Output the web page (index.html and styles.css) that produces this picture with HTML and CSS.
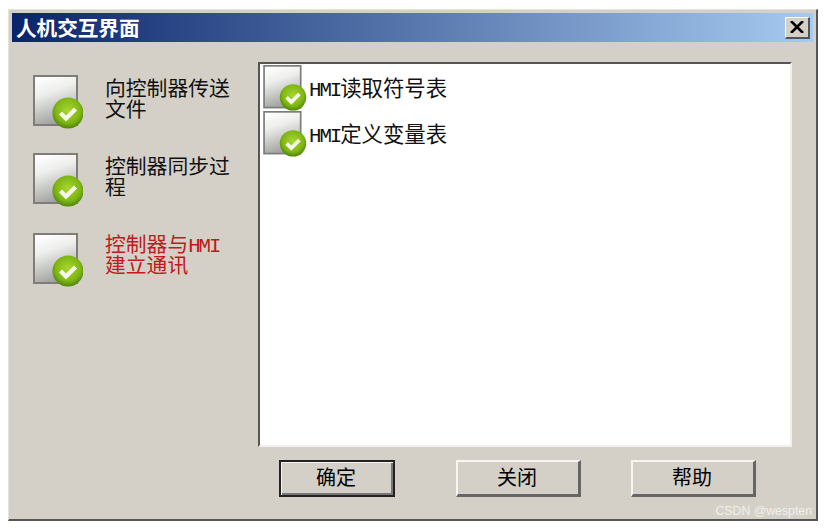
FILE: index.html
```html
<!DOCTYPE html>
<html lang="zh-CN">
  <head>
    <meta charset="UTF-8" />
    <title>人机交互界面</title>
    <link rel="stylesheet" href="styles.css">
  </head>
  <body>
    <svg class="defs" width="0" height="0">
      <defs>
        <linearGradient id="page-fill" x1="0.2" y1="0" x2="0.5" y2="1">
          <stop offset="0" stop-color="#ffffff" />
          <stop offset="0.35" stop-color="#eeeeec" />
          <stop offset="1" stop-color="#9c9c9a" />
        </linearGradient>
        <radialGradient id="badge-fill" cx="0.5" cy="0.42" r="0.62">
          <stop offset="0" stop-color="#a8d62e" />
          <stop offset="0.65" stop-color="#7fb614" />
          <stop offset="1" stop-color="#417a06" />
        </radialGradient>
        <symbol id="done-icon" viewBox="0 0 50 54">
          <rect x="1" y="1" width="43" height="49" fill="url(#page-fill)" stroke="#7d7d7b" stroke-width="2" />
          <circle cx="35" cy="38" r="15.5" fill="url(#badge-fill)" />
          <path d="M27.5 38l5.5 5.5 9.5-9.5" fill="none" stroke="#f4f8e8" stroke-width="4.4" />
        </symbol>
      </defs>
    </svg>

    <div class="window">
      <header class="titlebar">
        <span class="title">人机交互界面</span>
        <span class="close">
          <svg width="14" height="12" viewBox="0 0 14 12">
            <path d="M1 0l12 12M13 0L1 12" stroke="#000" stroke-width="2.6" />
          </svg>
        </span>
      </header>

      <div class="content">
        <div class="steps">
          <div class="step">
            <svg class="step-icon"><use href="#done-icon" /></svg>
            <div class="step-text">向控制器传送文件</div>
          </div>
          <div class="step">
            <svg class="step-icon"><use href="#done-icon" /></svg>
            <div class="step-text">控制器同步过程</div>
          </div>
          <div class="step step-active">
            <svg class="step-icon"><use href="#done-icon" /></svg>
            <div class="step-text">控制器与<span class="latin">HMI</span>建立通讯</div>
          </div>
        </div>

        <div class="right">
          <ul class="list">
            <li>
              <svg class="list-icon"><use href="#done-icon" /></svg>
              <span class="list-text"><span class="latin">HMI</span>读取符号表</span>
            </li>
            <li>
              <svg class="list-icon"><use href="#done-icon" /></svg>
              <span class="list-text"><span class="latin">HMI</span>定义变量表</span>
            </li>
          </ul>
          <div class="buttons">
            <a href="javascript:;" class="button button-default">确定</a>
            <a href="javascript:;" class="button button-close">关闭</a>
            <a href="javascript:;" class="button button-help">帮助</a>
          </div>
        </div>
      </div>

      <span class="watermark">CSDN @wespten</span>
    </div>
  </body>
</html>
```

FILE: styles.css
```css
html,
body,
ul,
li {
  margin: 0;
  padding: 0;
}

ul,
li {
  list-style: none;
}

a {
  text-decoration: none;
  color: #000;
}

body {
  background: #fff;
  font-family: "Noto Sans CJK SC", sans-serif;
  font-size: 20px;
  color: #111;
}

.defs {
  display: block;
  height: 0;
}

.window {
  position: relative;
  box-sizing: border-box;
  width: 810px;
  height: 512px;
  margin: 9px 0 0 8px;
  padding: 3px;
  background: #d4d0c8;
  border-top: 1px solid #e6e3dd;
  border-left: 1px solid #e6e3dd;
  border-right: 2px solid #555;
  border-bottom: 2px solid #555;
}

.titlebar {
  display: flex;
  align-items: center;
  justify-content: space-between;
  height: 29px;
  padding: 0 3px 0 4px;
  background: linear-gradient(to right, #0a246a, #a6caf0);
}

.title {
  font-size: 20.6px;
  font-weight: 700;
  line-height: 29px;
  color: #fff;
}

.close {
  display: flex;
  align-items: center;
  justify-content: center;
  box-sizing: border-box;
  width: 25px;
  height: 22px;
  background: #d4d0c8;
  border-top: 1px solid #fff;
  border-left: 1px solid #fff;
  border-right: 2px solid #555;
  border-bottom: 2px solid #555;
}

.content {
  display: flex;
  padding-top: 20px;
}

.steps {
  display: flex;
  flex-direction: column;
  gap: 24px;
  width: 246px;
  flex: none;
  padding: 13px 0 0 21px;
  box-sizing: border-box;
}

.step {
  display: flex;
  gap: 22px;
  height: 54px;
}

.step-active {
  margin-top: 2px;
  color: #c01a1a;
}

.step-icon {
  flex: none;
  width: 50px;
  height: 54px;
}

.step-text {
  width: 128px;
  padding-top: 2px;
  font-size: 20.8px;
  line-height: 21px;
  word-break: break-all;
}

.step-active .step-text {
  padding-top: 0;
}

.latin {
  font-family: "Liberation Mono", monospace;
  font-size: 20.8px;
  line-height: 0;
  letter-spacing: -2.1px;
}

.right {
  display: flex;
  flex-direction: column;
  width: 534px;
  flex: none;
}

.list {
  box-sizing: border-box;
  height: 385px;
  padding: 1px 0 0 2px;
  background: #fff;
  border-top: 2px solid #555;
  border-left: 2px solid #555;
  border-right: 2px solid #f2f0ec;
  border-bottom: 2px solid #f2f0ec;
}

.list li {
  display: flex;
  align-items: center;
  height: 46px;
  font-size: 21.4px;
}

.list-icon {
  flex: none;
  width: 45px;
  height: 46px;
}

.list-text {
  line-height: 21px;
  margin: -4px 0 0 2px;
}

.buttons {
  display: flex;
  padding: 13px 0 0 21px;
}

.button {
  box-sizing: border-box;
  display: flex;
  align-items: center;
  justify-content: center;
  width: 125px;
  height: 37px;
  padding: 0 2px 4px 0;
  font-size: 20px;
  background: #d4d0c8;
  border-top: 2px solid #f6f5f2;
  border-left: 2px solid #f6f5f2;
  border-right: 3px solid #666;
  border-bottom: 3px solid #666;
}

.button-default {
  width: 116px;
  border: 2px solid #222;
  box-shadow: inset 1px 1px 0 #f6f5f2, inset -2px -2px 0 #777;
}

.button-close {
  margin-left: 61px;
}

.button-help {
  margin-left: 50px;
}

.watermark {
  position: absolute;
  right: 4px;
  bottom: 0;
  font-family: "Liberation Sans", sans-serif;
  font-size: 12.3px;
  line-height: 16px;
  color: #f1efea;
}
```
